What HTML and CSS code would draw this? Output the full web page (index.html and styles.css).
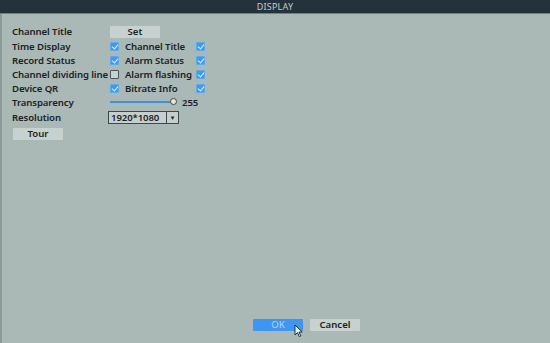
FILE: index.html
```html
<!DOCTYPE html>
<html>
<head>
<meta charset="utf-8">
<link rel="stylesheet" href="styles.css">
</head>
<body>
<div class="window">
  <div class="titlebar">DISPLAY</div>
  <div class="content">
    <div class="form">
      <div class="row">
        <span class="lbl">Channel Title</span>
        <button class="btn set">Set</button>
      </div>
      <div class="row">
        <span class="lbl">Time Display</span>
        <span class="cb on"></span>
        <span class="lbl2">Channel Title</span>
        <span class="cb on"></span>
      </div>
      <div class="row">
        <span class="lbl">Record Status</span>
        <span class="cb on"></span>
        <span class="lbl2">Alarm Status</span>
        <span class="cb on"></span>
      </div>
      <div class="row">
        <span class="lbl">Channel dividing line</span>
        <span class="cb"></span>
        <span class="lbl2">Alarm flashing</span>
        <span class="cb on"></span>
      </div>
      <div class="row">
        <span class="lbl">Device QR</span>
        <span class="cb on"></span>
        <span class="lbl2">Bitrate Info</span>
        <span class="cb on"></span>
      </div>
      <div class="row">
        <span class="lbl">Transparency</span>
        <span class="slider"><span class="knob"></span></span>
        <span class="val">255</span>
      </div>
      <div class="row res">
        <span class="lbl">Resolution</span>
        <span class="select"><span class="selval">1920*1080</span><span class="arrow">&#9662;</span></span>
      </div>
      <div class="row tourrow">
        <button class="btn tour">Tour</button>
      </div>
    </div>
    <div class="footer">
      <button class="btn ok">OK</button>
      <button class="btn cancel">Cancel</button>
      <svg class="cursor" width="9" height="14" viewBox="0 0 9 14"><path d="M1 1 L1 11 L3.5 8.6 L5.3 12.6 L6.8 11.9 L5 8 L8.2 8 Z" fill="#f4f6f7" stroke="#1b1f22" stroke-width="0.9"/></svg>
    </div>
  </div>
</div>
</body>
</html>
```
FILE: styles.css
```css
* { box-sizing: border-box; }
html, body { margin: 0; padding: 0; }
body {
  width: 550px; height: 343px; overflow: hidden;
  font-family: "Noto Sans", "DejaVu Sans", sans-serif;
  background: #aab9b5;
}
.window { width: 550px; height: 343px; display: flex; flex-direction: column; }
.titlebar {
  height: 14px; background: #24323b; color: #c4ccd0;
  font-size: 9px; line-height: 14px; text-align: center; letter-spacing: 0.2px;
  border-bottom: 1px solid #6f8088;
}
.content {
  flex: 1; display: flex; flex-direction: column;
  border-left: 2px solid #8d9b98;
  background: #aab9b5;
}
.form { padding: 11px 0 0 10px; display: flex; flex-direction: column; }
.row { height: 14px; display: flex; align-items: center; font-size: 9.6px; letter-spacing: -0.1px; font-weight: 600; color: #1b2226; }
.row > * { flex-shrink: 0; }
.lbl { width: 98px; white-space: nowrap; }
.lbl2 { width: 71px; margin-left: 6px; white-space: nowrap; }
.cb { width: 9px; height: 9px; border: 1px solid #4c5559; background: #c8d3d0; border-radius: 1px; position: relative; }
.cb.on { background: #3c9cf2; border-color: #5aaaf0; }
.cb.on::after {
  content: ""; position: absolute; left: 2px; top: 0.5px; width: 3px; height: 5px;
  border: solid #d8ecfc; border-width: 0 1.3px 1.3px 0; transform: rotate(40deg);
}
.btn {
  font-family: inherit; font-size: 9.6px; font-weight: 600; color: #1b2226;
  border: none; padding: 0; margin: 0;
  background: #c7d2cf; height: 12px; line-height: 12px; width: 50px;
  border-radius: 1px;
}
.row:first-child { height: 13px; margin-bottom: 1px; }
.slider { width: 64px; height: 2px; background: #3d8fe0; position: relative; }
.knob { position: absolute; right: -3px; top: -3px; width: 7px; height: 7px; border-radius: 50%; background: #e3e8e7; border: 1px solid #3c4448; }
.val { margin-left: 8px; }
.res { height: 16px; }
.select {
  width: 71px; height: 13px; border: 1px solid #3e474b; background: #c5d0cd;
  display: flex; align-items: center; margin-left: -2px; margin-top: 1px;
}
.selval { flex: 1; padding-left: 2px; font-size: 9.6px; font-weight: 600; }
.arrow { width: 12px; height: 11px; border-left: 1px solid #3e474b; font-size: 7px; line-height: 11px; text-align: center; }
.tourrow { height: 15px; margin-top: 1px; }
.tour { margin-left: 1px; }
.footer { margin-top: auto; height: 24px; display: flex; justify-content: flex-start; gap: 7px; padding-left: 251px; position: relative; }
.ok { background: #3d95f4; color: #a7cff6; font-weight: 500; }
.cancel { background: #c7d2cf; }
.cursor { position: absolute; left: 292px; top: 5px; }
```
